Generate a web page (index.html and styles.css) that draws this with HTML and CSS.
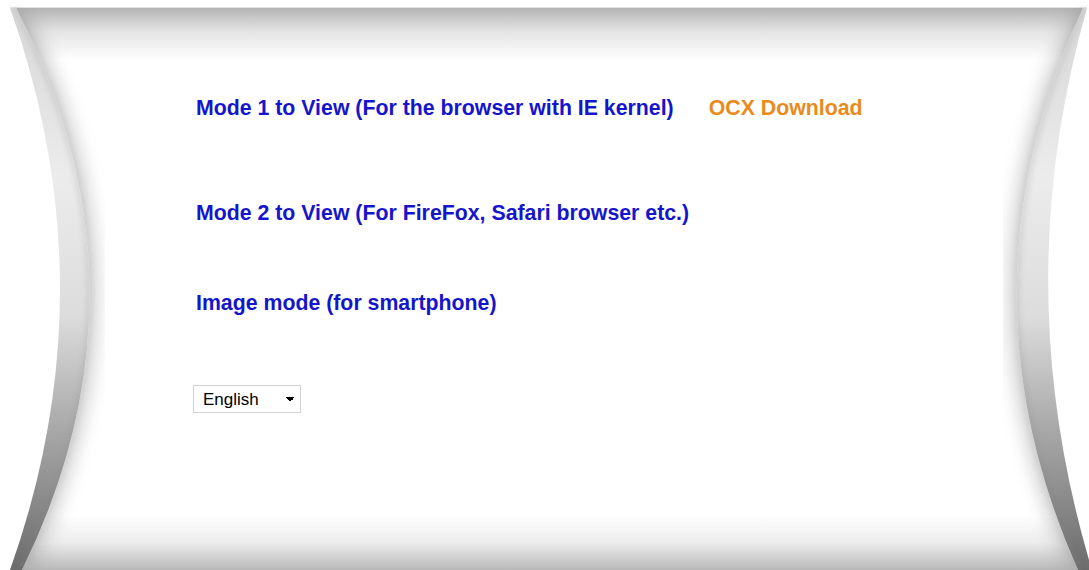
FILE: index.html
```html
<!DOCTYPE html>
<html lang="en">
<head>
<meta charset="utf-8">
<title>Login</title>
<link rel="stylesheet" href="styles.css">
</head>
<body>
<div class="frame">
  <svg class="pillow" viewBox="0 0 1089 570" preserveAspectRatio="none" aria-hidden="true">
    <defs>
      <linearGradient id="topShade" x1="0" y1="0" x2="0" y2="1">
        <stop offset="0" stop-color="#b4b4b4"/>
        <stop offset="0.45" stop-color="#e4e4e4"/>
        <stop offset="1" stop-color="#ffffff"/>
      </linearGradient>
      <linearGradient id="bottomShade" x1="0" y1="0" x2="0" y2="1">
        <stop offset="0" stop-color="#ffffff"/>
        <stop offset="0.5" stop-color="#ececec"/>
        <stop offset="1" stop-color="#b8b8b8"/>
      </linearGradient>
      <linearGradient id="bandShade" x1="0" y1="0" x2="0" y2="1">
        <stop offset="0" stop-color="#d6d6d6"/>
        <stop offset="0.3" stop-color="#ececec"/>
        <stop offset="0.55" stop-color="#dcdcdc"/>
        <stop offset="0.75" stop-color="#a8a8a8"/>
        <stop offset="1" stop-color="#6c6c6c"/>
      </linearGradient>
      <filter id="soft" x="-20%" y="-20%" width="140%" height="140%">
        <feGaussianBlur stdDeviation="9"/>
      </filter>
      <filter id="softer" x="-20%" y="-20%" width="140%" height="140%">
        <feGaussianBlur stdDeviation="3"/>
      </filter>
      <clipPath id="bodyClip">
        <path d="M16 8 Q160 289 22 570 L1078 570 Q953 289 1083 8 Z"/>
      </clipPath>
    </defs>

    <!-- cushion body -->
    <rect x="0" y="0" width="1089" height="570" fill="#ffffff"/>
    <line x1="10" y1="7.5" x2="1087" y2="7.5" stroke="#e2e2e2" stroke-width="1"/>
    <g clip-path="url(#bodyClip)">
      <rect x="0" y="8" width="1089" height="52" fill="url(#topShade)"/>
      <rect x="0" y="515" width="1089" height="55" fill="url(#bottomShade)"/>
      <!-- shadow cast by the curled sides -->
      <path d="M16 8 Q160 289 22 570" fill="none" stroke="#9a9a9a" stroke-width="14" filter="url(#soft)" opacity="0.55"/>
      <path d="M1083 8 Q953 289 1078 570" fill="none" stroke="#9a9a9a" stroke-width="14" filter="url(#soft)" opacity="0.55"/>
    </g>

    <!-- curled side bands -->
    <path d="M10 8 Q110 289 10 570 L22 570 Q160 289 16 8 Z" fill="url(#bandShade)"/>
    <path d="M1087 8 Q1007 289 1092 570 L1078 570 Q953 289 1083 8 Z" fill="url(#bandShade)"/>
    <path d="M16 8 Q160 289 22 570" fill="none" stroke="#8a8a8a" stroke-width="2" filter="url(#softer)" opacity="0.6"/>
    <path d="M1083 8 Q953 289 1078 570" fill="none" stroke="#8a8a8a" stroke-width="2" filter="url(#softer)" opacity="0.6"/>
  </svg>

  <div class="content">
    <div class="row row-first">
      <a class="mode" href="#">Mode 1 to View (For the browser with IE kernel)</a>
      <a class="download" href="#">OCX Download</a>
    </div>
    <div class="row row-second">
      <a class="mode" href="#">Mode 2 to View (For FireFox, Safari browser etc.)</a>
    </div>
    <div class="row row-third">
      <a class="mode" href="#">Image mode (for smartphone)</a>
    </div>
    <div class="lang">
      <select class="lang-select">
        <option>English</option>
      </select>
    </div>
  </div>
</div>
</body>
</html>
```

FILE: styles.css
```css
html, body {
  margin: 0;
  padding: 0;
  background: #ffffff;
}

.frame {
  position: relative;
  width: 1089px;
  height: 570px;
  overflow: hidden;
  font-family: "Liberation Sans", Arial, sans-serif;
}

.pillow {
  position: absolute;
  left: 0;
  top: 0;
  width: 1089px;
  height: 570px;
  display: block;
}

.content {
  position: relative;
  display: flex;
  flex-direction: column;
  padding: 96px 0 0 196px;
}

.row {
  display: flex;
  align-items: center;
  height: 24px;
}

.row-second {
  margin-top: 81px;
}

.row-third {
  margin-top: 66px;
}

.mode {
  color: #1515cc;
  font-size: 21.3px;
  font-weight: bold;
  text-decoration: none;
}

.download {
  color: #ea8a1c;
  font-size: 21.3px;
  font-weight: bold;
  text-decoration: none;
  margin-left: 35px;
}

.lang {
  margin-top: 70px;
  margin-left: -3px;
}

.lang-select {
  width: 108px;
  height: 28px;
  font-family: "Liberation Sans", Arial, sans-serif;
  font-size: 17px;
  color: #000000;
  background-color: #ffffff;
  border: 1px solid #d2d2d2;
  border-radius: 0;
  padding: 0 0 0 9px;
  appearance: none;
  -webkit-appearance: none;
  /* down-pointing caret built from two half triangles */
  background-image: linear-gradient(45deg, transparent 50%, #000 50%), linear-gradient(-45deg, transparent 50%, #000 50%);
  background-position: right 10px top 11px, right 5px top 11px;
  background-size: 5px 5px, 5px 5px;
  background-repeat: no-repeat;
}
```
